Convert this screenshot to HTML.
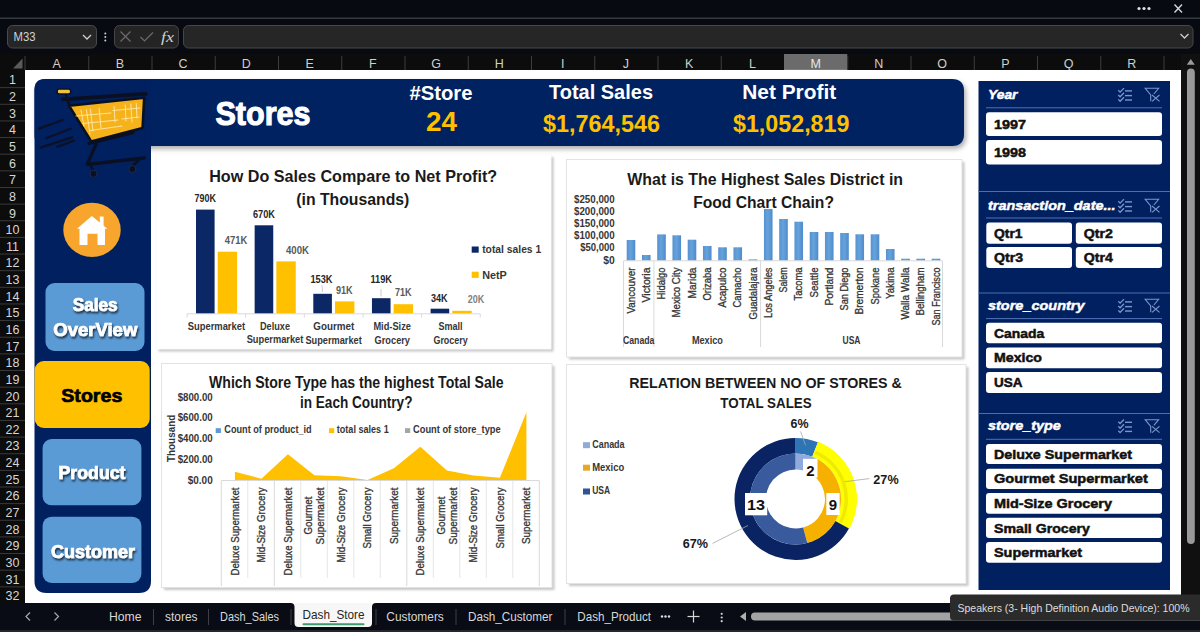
<!DOCTYPE html>
<html><head><meta charset="utf-8"><title>Dash_Store</title>
<style>
*{margin:0;padding:0;box-sizing:border-box}
html,body{width:1200px;height:632px;overflow:hidden;background:#0b0d15}
svg{display:block;font-family:"Liberation Sans",sans-serif}
</style></head><body>
<svg width="1200" height="632" viewBox="0 0 1200 632">
<rect x="0" y="0" width="1200" height="632" fill="#080a11"/>
<line x1="0" y1="18.3" x2="1200" y2="18.3" stroke="#363940" stroke-width="1.6" />
<circle cx="1139" cy="8.5" r="1.6" fill="#e0e0e0"/>
<circle cx="1144" cy="8.5" r="1.6" fill="#e0e0e0"/>
<circle cx="1149" cy="8.5" r="1.6" fill="#e0e0e0"/>
<line x1="1174.5" y1="4.5" x2="1182" y2="12.5" stroke="#d8d8d8" stroke-width="1.3" />
<line x1="1182" y1="4.5" x2="1174.5" y2="12.5" stroke="#d8d8d8" stroke-width="1.3" />
<rect x="7.5" y="25.5" width="89" height="22.5" fill="#262626" rx="5" stroke="#4a4a4a" stroke-width="1"/>
<text x="13.5" y="41.3" font-size="12" fill="#d2d2d2" textLength="22" lengthAdjust="spacingAndGlyphs">M33</text>
<path d="M83 35 L87 39 L91 35" fill="none" stroke="#cfcfcf" stroke-width="1.3"/>
<circle cx="105.3" cy="33.5" r="1" fill="#d0d0d0"/>
<circle cx="105.3" cy="37" r="1" fill="#d0d0d0"/>
<circle cx="105.3" cy="40.5" r="1" fill="#d0d0d0"/>
<rect x="114.5" y="25.5" width="64" height="22.5" fill="#242424" rx="5" stroke="#454545" stroke-width="1"/>
<line x1="120.5" y1="31.5" x2="130.5" y2="41.5" stroke="#6a6a6a" stroke-width="1.2" />
<line x1="130.5" y1="31.5" x2="120.5" y2="41.5" stroke="#6a6a6a" stroke-width="1.2" />
<path d="M140.5 37 L144.5 41 L153 32.5" fill="none" stroke="#6a6a6a" stroke-width="1.2"/>
<text x="161" y="42" font-size="14" fill="#d0d0d0" font-style="italic" textLength="13" lengthAdjust="spacingAndGlyphs" font-family="Liberation Serif">fx</text>
<rect x="183.5" y="25.5" width="1009.5" height="22.5" fill="#262626" rx="5" stroke="#474747" stroke-width="1"/>
<path d="M1180.5 34 L1184.5 38 L1188.5 34" fill="none" stroke="#cfcfcf" stroke-width="1.3"/>
<rect x="0" y="54" width="1181" height="16" fill="#0c0c0c"/>
<path d="M13 68.5 L22.5 68.5 L22.5 58.5 Z" fill="#5a5a5a"/>
<text x="56.625" y="67.5" font-size="12.5" fill="#cfcfcf" text-anchor="middle">A</text>
<line x1="88.75" y1="56" x2="88.75" y2="70" stroke="#3c3c3c" stroke-width="1" />
<text x="119.875" y="67.5" font-size="12.5" fill="#cfcfcf" text-anchor="middle">B</text>
<line x1="152.0" y1="56" x2="152.0" y2="70" stroke="#3c3c3c" stroke-width="1" />
<text x="183.125" y="67.5" font-size="12.5" fill="#cfcfcf" text-anchor="middle">C</text>
<line x1="215.25" y1="56" x2="215.25" y2="70" stroke="#3c3c3c" stroke-width="1" />
<text x="246.375" y="67.5" font-size="12.5" fill="#cfcfcf" text-anchor="middle">D</text>
<line x1="278.5" y1="56" x2="278.5" y2="70" stroke="#3c3c3c" stroke-width="1" />
<text x="309.625" y="67.5" font-size="12.5" fill="#cfcfcf" text-anchor="middle">E</text>
<line x1="341.75" y1="56" x2="341.75" y2="70" stroke="#3c3c3c" stroke-width="1" />
<text x="372.875" y="67.5" font-size="12.5" fill="#cfcfcf" text-anchor="middle">F</text>
<line x1="405.0" y1="56" x2="405.0" y2="70" stroke="#3c3c3c" stroke-width="1" />
<text x="436.125" y="67.5" font-size="12.5" fill="#cfcfcf" text-anchor="middle">G</text>
<line x1="468.25" y1="56" x2="468.25" y2="70" stroke="#3c3c3c" stroke-width="1" />
<text x="499.375" y="67.5" font-size="12.5" fill="#cfcfcf" text-anchor="middle">H</text>
<line x1="531.5" y1="56" x2="531.5" y2="70" stroke="#3c3c3c" stroke-width="1" />
<text x="562.625" y="67.5" font-size="12.5" fill="#cfcfcf" text-anchor="middle">I</text>
<line x1="594.75" y1="56" x2="594.75" y2="70" stroke="#3c3c3c" stroke-width="1" />
<text x="625.875" y="67.5" font-size="12.5" fill="#cfcfcf" text-anchor="middle">J</text>
<line x1="658.0" y1="56" x2="658.0" y2="70" stroke="#3c3c3c" stroke-width="1" />
<text x="689.125" y="67.5" font-size="12.5" fill="#cfcfcf" text-anchor="middle">K</text>
<line x1="721.25" y1="56" x2="721.25" y2="70" stroke="#3c3c3c" stroke-width="1" />
<text x="752.375" y="67.5" font-size="12.5" fill="#cfcfcf" text-anchor="middle">L</text>
<line x1="784.5" y1="56" x2="784.5" y2="70" stroke="#3c3c3c" stroke-width="1" />
<rect x="784.0" y="54" width="63.25" height="16" fill="#6b6b6b"/>
<line x1="784.0" y1="69.5" x2="847.25" y2="69.5" stroke="#3f9f6f" stroke-width="1" />
<text x="815.625" y="67.5" font-size="12.5" fill="#e8e8e8" text-anchor="middle">M</text>
<line x1="847.75" y1="56" x2="847.75" y2="70" stroke="#3c3c3c" stroke-width="1" />
<text x="878.875" y="67.5" font-size="12.5" fill="#cfcfcf" text-anchor="middle">N</text>
<line x1="911.0" y1="56" x2="911.0" y2="70" stroke="#3c3c3c" stroke-width="1" />
<text x="942.125" y="67.5" font-size="12.5" fill="#cfcfcf" text-anchor="middle">O</text>
<line x1="974.25" y1="56" x2="974.25" y2="70" stroke="#3c3c3c" stroke-width="1" />
<text x="1005.375" y="67.5" font-size="12.5" fill="#cfcfcf" text-anchor="middle">P</text>
<line x1="1037.5" y1="56" x2="1037.5" y2="70" stroke="#3c3c3c" stroke-width="1" />
<text x="1068.625" y="67.5" font-size="12.5" fill="#cfcfcf" text-anchor="middle">Q</text>
<line x1="1100.75" y1="56" x2="1100.75" y2="70" stroke="#3c3c3c" stroke-width="1" />
<text x="1131.875" y="67.5" font-size="12.5" fill="#cfcfcf" text-anchor="middle">R</text>
<line x1="1164.0" y1="56" x2="1164.0" y2="70" stroke="#3c3c3c" stroke-width="1" />
<line x1="25" y1="56" x2="25" y2="70" stroke="#3c3c3c" stroke-width="1" />
<rect x="0" y="70" width="25" height="533" fill="#0c0c0c"/>
<text x="12.5" y="84.4" font-size="12.5" fill="#d6d6d6" text-anchor="middle">1</text>
<line x1="0" y1="87.64" x2="25" y2="87.64" stroke="#3a3a3a" stroke-width="1" />
<text x="12.5" y="101.04" font-size="12.5" fill="#d6d6d6" text-anchor="middle">2</text>
<line x1="0" y1="104.28" x2="25" y2="104.28" stroke="#3a3a3a" stroke-width="1" />
<text x="12.5" y="117.68" font-size="12.5" fill="#d6d6d6" text-anchor="middle">3</text>
<line x1="0" y1="120.92" x2="25" y2="120.92" stroke="#3a3a3a" stroke-width="1" />
<text x="12.5" y="134.32" font-size="12.5" fill="#d6d6d6" text-anchor="middle">4</text>
<line x1="0" y1="137.56" x2="25" y2="137.56" stroke="#3a3a3a" stroke-width="1" />
<text x="12.5" y="150.96" font-size="12.5" fill="#d6d6d6" text-anchor="middle">5</text>
<line x1="0" y1="154.2" x2="25" y2="154.2" stroke="#3a3a3a" stroke-width="1" />
<text x="12.5" y="167.6" font-size="12.5" fill="#d6d6d6" text-anchor="middle">6</text>
<line x1="0" y1="170.83999999999997" x2="25" y2="170.83999999999997" stroke="#3a3a3a" stroke-width="1" />
<text x="12.5" y="184.24" font-size="12.5" fill="#d6d6d6" text-anchor="middle">7</text>
<line x1="0" y1="187.48000000000002" x2="25" y2="187.48000000000002" stroke="#3a3a3a" stroke-width="1" />
<text x="12.5" y="200.88000000000002" font-size="12.5" fill="#d6d6d6" text-anchor="middle">8</text>
<line x1="0" y1="204.12" x2="25" y2="204.12" stroke="#3a3a3a" stroke-width="1" />
<text x="12.5" y="217.52" font-size="12.5" fill="#d6d6d6" text-anchor="middle">9</text>
<line x1="0" y1="220.76" x2="25" y2="220.76" stroke="#3a3a3a" stroke-width="1" />
<text x="12.5" y="234.16" font-size="12.5" fill="#d6d6d6" text-anchor="middle">10</text>
<line x1="0" y1="237.39999999999998" x2="25" y2="237.39999999999998" stroke="#3a3a3a" stroke-width="1" />
<text x="12.5" y="250.8" font-size="12.5" fill="#d6d6d6" text-anchor="middle">11</text>
<line x1="0" y1="254.04000000000002" x2="25" y2="254.04000000000002" stroke="#3a3a3a" stroke-width="1" />
<text x="12.5" y="267.44" font-size="12.5" fill="#d6d6d6" text-anchor="middle">12</text>
<line x1="0" y1="270.68" x2="25" y2="270.68" stroke="#3a3a3a" stroke-width="1" />
<text x="12.5" y="284.08" font-size="12.5" fill="#d6d6d6" text-anchor="middle">13</text>
<line x1="0" y1="287.32" x2="25" y2="287.32" stroke="#3a3a3a" stroke-width="1" />
<text x="12.5" y="300.71999999999997" font-size="12.5" fill="#d6d6d6" text-anchor="middle">14</text>
<line x1="0" y1="303.96" x2="25" y2="303.96" stroke="#3a3a3a" stroke-width="1" />
<text x="12.5" y="317.36" font-size="12.5" fill="#d6d6d6" text-anchor="middle">15</text>
<line x1="0" y1="320.6" x2="25" y2="320.6" stroke="#3a3a3a" stroke-width="1" />
<text x="12.5" y="334.0" font-size="12.5" fill="#d6d6d6" text-anchor="middle">16</text>
<line x1="0" y1="337.24" x2="25" y2="337.24" stroke="#3a3a3a" stroke-width="1" />
<text x="12.5" y="350.64" font-size="12.5" fill="#d6d6d6" text-anchor="middle">17</text>
<line x1="0" y1="353.88" x2="25" y2="353.88" stroke="#3a3a3a" stroke-width="1" />
<text x="12.5" y="367.28" font-size="12.5" fill="#d6d6d6" text-anchor="middle">18</text>
<line x1="0" y1="370.52" x2="25" y2="370.52" stroke="#3a3a3a" stroke-width="1" />
<text x="12.5" y="383.91999999999996" font-size="12.5" fill="#d6d6d6" text-anchor="middle">19</text>
<line x1="0" y1="387.15999999999997" x2="25" y2="387.15999999999997" stroke="#3a3a3a" stroke-width="1" />
<text x="12.5" y="400.56" font-size="12.5" fill="#d6d6d6" text-anchor="middle">20</text>
<line x1="0" y1="403.8" x2="25" y2="403.8" stroke="#3a3a3a" stroke-width="1" />
<text x="12.5" y="417.2" font-size="12.5" fill="#d6d6d6" text-anchor="middle">21</text>
<line x1="0" y1="420.44" x2="25" y2="420.44" stroke="#3a3a3a" stroke-width="1" />
<text x="12.5" y="433.84" font-size="12.5" fill="#d6d6d6" text-anchor="middle">22</text>
<line x1="0" y1="437.08" x2="25" y2="437.08" stroke="#3a3a3a" stroke-width="1" />
<text x="12.5" y="450.48" font-size="12.5" fill="#d6d6d6" text-anchor="middle">23</text>
<line x1="0" y1="453.72" x2="25" y2="453.72" stroke="#3a3a3a" stroke-width="1" />
<text x="12.5" y="467.12" font-size="12.5" fill="#d6d6d6" text-anchor="middle">24</text>
<line x1="0" y1="470.36" x2="25" y2="470.36" stroke="#3a3a3a" stroke-width="1" />
<text x="12.5" y="483.76" font-size="12.5" fill="#d6d6d6" text-anchor="middle">25</text>
<line x1="0" y1="487.0" x2="25" y2="487.0" stroke="#3a3a3a" stroke-width="1" />
<text x="12.5" y="500.4" font-size="12.5" fill="#d6d6d6" text-anchor="middle">26</text>
<line x1="0" y1="503.64" x2="25" y2="503.64" stroke="#3a3a3a" stroke-width="1" />
<text x="12.5" y="517.04" font-size="12.5" fill="#d6d6d6" text-anchor="middle">27</text>
<line x1="0" y1="520.28" x2="25" y2="520.28" stroke="#3a3a3a" stroke-width="1" />
<text x="12.5" y="533.68" font-size="12.5" fill="#d6d6d6" text-anchor="middle">28</text>
<line x1="0" y1="536.92" x2="25" y2="536.92" stroke="#3a3a3a" stroke-width="1" />
<text x="12.5" y="550.32" font-size="12.5" fill="#d6d6d6" text-anchor="middle">29</text>
<line x1="0" y1="553.5600000000001" x2="25" y2="553.5600000000001" stroke="#3a3a3a" stroke-width="1" />
<text x="12.5" y="566.9599999999999" font-size="12.5" fill="#d6d6d6" text-anchor="middle">30</text>
<line x1="0" y1="570.1999999999999" x2="25" y2="570.1999999999999" stroke="#3a3a3a" stroke-width="1" />
<text x="12.5" y="583.6" font-size="12.5" fill="#d6d6d6" text-anchor="middle">31</text>
<line x1="0" y1="586.84" x2="25" y2="586.84" stroke="#3a3a3a" stroke-width="1" />
<text x="12.5" y="600.24" font-size="12.5" fill="#d6d6d6" text-anchor="middle">32</text>
<line x1="0" y1="603.48" x2="25" y2="603.48" stroke="#3a3a3a" stroke-width="1" />
<rect x="25" y="70" width="1156" height="533" fill="#ffffff"/>
<rect x="1181" y="54" width="19" height="549" fill="#101010"/>
<path d="M1186.8 64.7 L1190.8 59 L1194.8 64.7 Z" fill="#9a9a9a"/>
<rect x="1187" y="68.5" width="7.8" height="475.5" fill="#9a9a9a" rx="3.9"/>
<rect x="0" y="603" width="1200" height="29" fill="#0a0c15"/>
<rect x="0" y="630" width="1200" height="2" fill="#23262d"/>
<path d="M30 612.5 L26 616.5 L30 620.5" fill="none" stroke="#a8a8a8" stroke-width="1.2"/>
<path d="M54.5 612.5 L58.5 616.5 L54.5 620.5" fill="none" stroke="#a8a8a8" stroke-width="1.2"/>
<text x="109" y="621" font-size="12.2" fill="#d8d8d8" textLength="32.5" lengthAdjust="spacingAndGlyphs">Home</text>
<line x1="153.5" y1="609" x2="153.5" y2="625" stroke="#3d3f46" stroke-width="1" />
<text x="165" y="621" font-size="12.2" fill="#d8d8d8" textLength="32.5" lengthAdjust="spacingAndGlyphs">stores</text>
<line x1="208.5" y1="609" x2="208.5" y2="625" stroke="#3d3f46" stroke-width="1" />
<text x="220" y="621" font-size="12.2" fill="#d8d8d8" textLength="59" lengthAdjust="spacingAndGlyphs">Dash_Sales</text>
<line x1="291" y1="609" x2="291" y2="625" stroke="#3d3f46" stroke-width="1" />
<path d="M290.5 603 Q294.5 603 294.5 607 L294.5 623 Q294.5 627 298.5 627 L368 627 Q372 627 372 623 L372 607 Q372 603 376 603 Z" fill="#f7f7f7"/>
<text x="302.5" y="619.3" font-size="12.2" fill="#262626" textLength="62" lengthAdjust="spacingAndGlyphs">Dash_Store</text>
<rect x="302.5" y="623.2" width="62" height="2" fill="#3d9c6e" rx="1"/>
<line x1="376" y1="609" x2="376" y2="625" stroke="#3d3f46" stroke-width="1" />
<text x="386.3" y="621" font-size="12.2" fill="#d8d8d8" textLength="57.5" lengthAdjust="spacingAndGlyphs">Customers</text>
<line x1="456" y1="609" x2="456" y2="625" stroke="#3d3f46" stroke-width="1" />
<text x="468" y="621" font-size="12.2" fill="#d8d8d8" textLength="84.5" lengthAdjust="spacingAndGlyphs">Dash_Customer</text>
<line x1="565" y1="609" x2="565" y2="625" stroke="#3d3f46" stroke-width="1" />
<text x="577.3" y="621" font-size="12.2" fill="#d8d8d8" textLength="73.7" lengthAdjust="spacingAndGlyphs">Dash_Product</text>
<circle cx="662" cy="616.5" r="1.2" fill="#dcdcdc"/>
<circle cx="665.5" cy="616.5" r="1.2" fill="#dcdcdc"/>
<circle cx="669" cy="616.5" r="1.2" fill="#dcdcdc"/>
<line x1="687.5" y1="616.5" x2="699.5" y2="616.5" stroke="#d8d8d8" stroke-width="1.2" />
<line x1="693.5" y1="610.5" x2="693.5" y2="622.5" stroke="#d8d8d8" stroke-width="1.2" />
<circle cx="721.7" cy="613.8" r="1.1" fill="#d0d0d0"/>
<circle cx="721.7" cy="617.5" r="1.1" fill="#d0d0d0"/>
<circle cx="721.7" cy="621.2" r="1.1" fill="#d0d0d0"/>
<path d="M740 616.5 L746 612 L746 621 Z" fill="#b0b0b0"/>
<rect x="751" y="612.5" width="460" height="8" fill="#a3a3a3" rx="4"/>
<rect x="950" y="594.5" width="260" height="26" fill="#2b2b2b" rx="4"/>
<text x="957.5" y="611.5" font-size="10.6" fill="#dedede" textLength="232" lengthAdjust="spacingAndGlyphs">Speakers (3- High Definition Audio Device): 100%</text>
<defs><filter id="sh" x="-10%" y="-10%" width="120%" height="130%"><feGaussianBlur in="SourceAlpha" stdDeviation="2.4"/><feOffset dx="1.5" dy="3"/><feComponentTransfer><feFuncA type="linear" slope="0.32"/></feComponentTransfer><feMerge><feMergeNode/><feMergeNode in="SourceGraphic"/></feMerge></filter><filter id="tsh" x="-20%" y="-20%" width="140%" height="160%"><feGaussianBlur in="SourceAlpha" stdDeviation="0.9"/><feOffset dx="1.2" dy="1.8"/><feComponentTransfer><feFuncA type="linear" slope="0.75"/></feComponentTransfer><feMerge><feMergeNode/><feMergeNode in="SourceGraphic"/></feMerge></filter><linearGradient id="bar" x1="0" x2="1" y1="0" y2="0"><stop offset="0" stop-color="#5592d0"/><stop offset="0.45" stop-color="#66a3dc"/><stop offset="1" stop-color="#4f8bca"/></linearGradient></defs>
<path filter="url(#sh)" d="M45.5 79 L952 79 Q964 79 964 91 L964 134 Q964 146 952 146 L45.5 146 Q34.5 146 34.5 135 L34.5 90 Q34.5 79 45.5 79 Z" fill="#002060"/>
<path d="M45.5 79 L151 79 L151 581 Q151 593 139 593 L46.5 593 Q34.5 593 34.5 581 L34.5 90 Q34.5 79 45.5 79 Z" fill="#002060"/>
<g stroke-linecap="round" stroke-linejoin="round">
<line x1="39" y1="128.7" x2="62.7" y2="120" stroke="#0a1128" stroke-width="2.3" />
<line x1="46" y1="138.2" x2="70.6" y2="128.7" stroke="#0a1128" stroke-width="2.3" />
<line x1="40.5" y1="147.7" x2="72.2" y2="137.4" stroke="#0a1128" stroke-width="2.3" />
<line x1="57.2" y1="146.9" x2="73.8" y2="140.6" stroke="#0a1128" stroke-width="2.3" />
<path d="M96 144.5 L87.2 164.3 L144.2 158" fill="none" stroke="#0a0f22" stroke-width="3.3"/>
<path d="M90 165 L93.6 171 M140 159 L132.4 166" stroke="#0a0f22" stroke-width="2.4"/>
<circle cx="93.6" cy="173.8" r="3.6" fill="#0a0f22" stroke="#1e2a4a" stroke-width="1"/>
<circle cx="132.4" cy="169" r="3.6" fill="#0a0f22" stroke="#1e2a4a" stroke-width="1"/>
<path d="M88.8 143.5 L133.1 132.7" stroke="#0a0f22" stroke-width="3"/>
<path d="M69 105.7 L144.2 97.8 L142.6 127.9 L91.2 141.4 Z" fill="#F5B21B" stroke="#0a0f22" stroke-width="2.6"/>
<path d="M62.7 99.4 L145.8 93.9" stroke="#0a0f22" stroke-width="3.8"/>
<path d="M65.9 94.7 L69 104.2" stroke="#0a0f22" stroke-width="2.6"/>
<path d="M80.9 110 L84 126 M86.4 109.5 L90 134 M90.4 109 L93 131 M99.1 108 L101 128 M114.1 106.5 L115 122 M125.2 105 L126 121 M130.8 104 L132 122 M136.3 103.5 L137 118 M76 116 L111 113 M113 110.5 L140 108 M83 123.5 L118 120 M122 119 L139 117 M90 130.5 L122 126" stroke="#ffe9a8" stroke-width="0.9" fill="none"/>
<rect x="57.2" y="89.1" width="13.4" height="4.8" fill="#F0C040" rx="2" stroke="#0a0f22" stroke-width="1.4"/>
</g>
<ellipse cx="92" cy="229.9" rx="28.7" ry="27.1" fill="#F7A52C"/>
<path d="M77 228.8 L91.8 216 L99.8 222.6 L99.8 216.5 L103.6 216.5 L103.6 225.8 L107.4 228.8 L105 228.8 L105 245 L97.5 245 L97.5 233.7 L87.5 233.7 L87.5 245 L79.5 245 L79.5 228.8 Z" fill="#ffffff"/>
<rect x="45.5" y="283" width="99.0" height="68" fill="#5B9BD5" rx="9"/>
<rect x="34.7" y="361" width="114.99999999999999" height="67" fill="#FFC000" rx="9"/>
<rect x="42.6" y="439" width="98.80000000000001" height="66.30000000000001" fill="#5B9BD5" rx="9"/>
<rect x="42.6" y="516.7" width="98.80000000000001" height="66.29999999999995" fill="#5B9BD5" rx="9"/>
<g filter="url(#tsh)">
<text x="95.2" y="311.3" font-size="17.5" fill="#fff" text-anchor="middle" font-weight="bold" textLength="45" lengthAdjust="spacingAndGlyphs" stroke="#fff" stroke-width="0.7">Sales</text>
<text x="95.3" y="336" font-size="17.5" fill="#fff" text-anchor="middle" font-weight="bold" textLength="84" lengthAdjust="spacingAndGlyphs" stroke="#fff" stroke-width="0.7">OverView</text>
<text x="92" y="479.2" font-size="18" fill="#fff" text-anchor="middle" font-weight="bold" textLength="67" lengthAdjust="spacingAndGlyphs" stroke="#fff" stroke-width="0.7">Product</text>
<text x="93" y="557.6" font-size="18" fill="#fff" text-anchor="middle" font-weight="bold" textLength="84" lengthAdjust="spacingAndGlyphs" stroke="#fff" stroke-width="0.7">Customer</text>
</g>
<text x="91.8" y="402" font-size="19" fill="#000" text-anchor="middle" font-weight="bold" textLength="61" lengthAdjust="spacingAndGlyphs" stroke="#000" stroke-width="0.7">Stores</text>
<text x="263" y="124.5" font-size="32.5" fill="#fff" text-anchor="middle" font-weight="bold" textLength="95" lengthAdjust="spacingAndGlyphs" stroke="#fff" stroke-width="1.1">Stores</text>
<text x="441" y="100" font-size="19.5" fill="#fff" text-anchor="middle" font-weight="bold" textLength="63" lengthAdjust="spacingAndGlyphs">#Store</text>
<text x="441.5" y="131" font-size="27" fill="#FFC000" text-anchor="middle" font-weight="bold" textLength="31" lengthAdjust="spacingAndGlyphs">24</text>
<text x="601" y="99" font-size="20.5" fill="#fff" text-anchor="middle" font-weight="bold" textLength="104" lengthAdjust="spacingAndGlyphs">Total Sales</text>
<text x="601.6" y="132" font-size="24.5" fill="#FFC000" text-anchor="middle" font-weight="bold" textLength="117" lengthAdjust="spacingAndGlyphs">$1,764,546</text>
<text x="789.2" y="99" font-size="20.5" fill="#fff" text-anchor="middle" font-weight="bold" textLength="94" lengthAdjust="spacingAndGlyphs">Net Profit</text>
<text x="791.2" y="132" font-size="24.5" fill="#FFC000" text-anchor="middle" font-weight="bold" textLength="116.5" lengthAdjust="spacingAndGlyphs">$1,052,819</text>
<defs><filter id="blur2" x="-5%" y="-5%" width="110%" height="110%"><feGaussianBlur stdDeviation="1.3"/></filter></defs>
<rect x="158.5" y="157.0" width="395" height="194.5" fill="rgba(0,0,0,0.22)" filter="url(#blur2)"/>
<rect x="156" y="154.5" width="395" height="194.5" fill="#fff" stroke="#fafafa" stroke-width="1"/>
<rect x="569.0" y="162.0" width="395.5" height="197.5" fill="rgba(0,0,0,0.22)" filter="url(#blur2)"/>
<rect x="566.5" y="159.5" width="395.5" height="197.5" fill="#fff" stroke="#e3e3e3" stroke-width="1"/>
<rect x="164.0" y="366.0" width="390.5" height="224.0" fill="rgba(0,0,0,0.22)" filter="url(#blur2)"/>
<rect x="161.5" y="363.5" width="390.5" height="224.0" fill="#fff" stroke="#e3e3e3" stroke-width="1"/>
<rect x="569.0" y="367.0" width="399.5" height="219.0" fill="rgba(0,0,0,0.22)" filter="url(#blur2)"/>
<rect x="566.5" y="364.5" width="399.5" height="219.0" fill="#fff" stroke="#e3e3e3" stroke-width="1"/>
<defs><linearGradient id="bsh" x1="0" x2="0" y1="0" y2="1"><stop offset="0" stop-color="#000" stop-opacity="0.28"/><stop offset="1" stop-color="#000" stop-opacity="0"/></linearGradient></defs>
<text x="353.2" y="181.8" font-size="16.5" fill="#1a1a1a" text-anchor="middle" font-weight="bold" textLength="288" lengthAdjust="spacingAndGlyphs">How Do Sales Compare to Net Profit?</text>
<text x="352.8" y="204.5" font-size="16.5" fill="#1a1a1a" text-anchor="middle" font-weight="bold" textLength="113" lengthAdjust="spacingAndGlyphs">(in Thousands)</text>
<line x1="187" y1="313.8" x2="480" y2="313.8" stroke="#d9d9d9" stroke-width="1" />
<line x1="187.0" y1="313.8" x2="187.0" y2="317.5" stroke="#d9d9d9" stroke-width="1" />
<line x1="245.65" y1="313.8" x2="245.65" y2="317.5" stroke="#d9d9d9" stroke-width="1" />
<line x1="304.3" y1="313.8" x2="304.3" y2="317.5" stroke="#d9d9d9" stroke-width="1" />
<line x1="362.95" y1="313.8" x2="362.95" y2="317.5" stroke="#d9d9d9" stroke-width="1" />
<line x1="421.6" y1="313.8" x2="421.6" y2="317.5" stroke="#d9d9d9" stroke-width="1" />
<line x1="480.25" y1="313.8" x2="480.25" y2="317.5" stroke="#d9d9d9" stroke-width="1" />
<rect x="196.0" y="209.6" width="18.6" height="103.7" fill="#0C2766"/>
<rect x="217.7" y="251.7" width="19.4" height="61.6" fill="#FFC000"/>
<rect x="254.65" y="225.3" width="18.6" height="88.0" fill="#0C2766"/>
<rect x="276.35" y="261.4" width="19.4" height="51.9" fill="#FFC000"/>
<rect x="313.3" y="293.8" width="18.6" height="19.5" fill="#0C2766"/>
<rect x="335.0" y="301.4" width="19.4" height="11.9" fill="#FFC000"/>
<rect x="371.95" y="298.2" width="18.6" height="15.1" fill="#0C2766"/>
<rect x="393.65" y="304.2" width="19.4" height="9.1" fill="#FFC000"/>
<rect x="430.6" y="308.7" width="18.6" height="4.6" fill="#0C2766"/>
<rect x="452.3" y="310.8" width="19.4" height="2.5" fill="#FFC000"/>
<text x="205.3" y="201.6" font-size="10.2" fill="#262626" text-anchor="middle" font-weight="bold" textLength="21.4" lengthAdjust="spacingAndGlyphs">790K</text>
<text x="235.95" y="244" font-size="10.2" fill="#595959" text-anchor="middle" font-weight="bold" textLength="22.5" lengthAdjust="spacingAndGlyphs">471K</text>
<text x="264.0" y="217.5" font-size="10.2" fill="#262626" text-anchor="middle" font-weight="bold" textLength="22" lengthAdjust="spacingAndGlyphs">670K</text>
<text x="297.5" y="253.6" font-size="10.2" fill="#595959" text-anchor="middle" font-weight="bold" textLength="23" lengthAdjust="spacingAndGlyphs">400K</text>
<text x="321.45" y="283" font-size="10.2" fill="#262626" text-anchor="middle" font-weight="bold" textLength="22.1" lengthAdjust="spacingAndGlyphs">153K</text>
<text x="344.35" y="294" font-size="10.2" fill="#595959" text-anchor="middle" font-weight="bold" textLength="16.7" lengthAdjust="spacingAndGlyphs">91K</text>
<text x="381.2" y="282.6" font-size="10.2" fill="#262626" text-anchor="middle" font-weight="bold" textLength="21.6" lengthAdjust="spacingAndGlyphs">119K</text>
<text x="403.3" y="295.6" font-size="10.2" fill="#595959" text-anchor="middle" font-weight="bold" textLength="16.6" lengthAdjust="spacingAndGlyphs">71K</text>
<text x="439.3" y="301.6" font-size="10.2" fill="#262626" text-anchor="middle" font-weight="bold" textLength="16.6" lengthAdjust="spacingAndGlyphs">34K</text>
<text x="476.05" y="303" font-size="10.2" fill="#7f7f7f" text-anchor="middle" font-weight="bold" textLength="16.5" lengthAdjust="spacingAndGlyphs">20K</text>
<line x1="322" y1="285" x2="322.5" y2="292" stroke="#bfbfbf" stroke-width="0.8" />
<line x1="381" y1="289" x2="381" y2="296.5" stroke="#bfbfbf" stroke-width="0.8" />
<text x="216.4" y="330" font-size="10" fill="#363636" text-anchor="middle" font-weight="bold" textLength="57.3" lengthAdjust="spacingAndGlyphs">Supermarket</text>
<text x="275" y="329.8" font-size="10" fill="#363636" text-anchor="middle" font-weight="bold" textLength="30" lengthAdjust="spacingAndGlyphs">Deluxe</text>
<text x="275" y="342.8" font-size="10" fill="#363636" text-anchor="middle" font-weight="bold" textLength="56.7" lengthAdjust="spacingAndGlyphs">Supermarket</text>
<text x="333.8" y="330" font-size="10" fill="#363636" text-anchor="middle" font-weight="bold" textLength="41" lengthAdjust="spacingAndGlyphs">Gourmet</text>
<text x="333.6" y="343.5" font-size="10" fill="#363636" text-anchor="middle" font-weight="bold" textLength="56.3" lengthAdjust="spacingAndGlyphs">Supermarket</text>
<text x="392.2" y="330" font-size="10" fill="#363636" text-anchor="middle" font-weight="bold" textLength="37.6" lengthAdjust="spacingAndGlyphs">Mid-Size</text>
<text x="392.3" y="343.5" font-size="10" fill="#363636" text-anchor="middle" font-weight="bold" textLength="35.4" lengthAdjust="spacingAndGlyphs">Grocery</text>
<text x="450.6" y="330" font-size="10" fill="#363636" text-anchor="middle" font-weight="bold" textLength="24" lengthAdjust="spacingAndGlyphs">Small</text>
<text x="450.6" y="343.5" font-size="10" fill="#363636" text-anchor="middle" font-weight="bold" textLength="34.3" lengthAdjust="spacingAndGlyphs">Grocery</text>
<rect x="471.7" y="246.5" width="7" height="6.2" fill="#0C2766"/>
<text x="482.2" y="252.5" font-size="11" fill="#363636" font-weight="bold" textLength="59" lengthAdjust="spacingAndGlyphs">total sales 1</text>
<rect x="471.7" y="271.7" width="7" height="6.2" fill="#FFC000"/>
<text x="482.2" y="278.7" font-size="11" fill="#363636" font-weight="bold" textLength="24.6" lengthAdjust="spacingAndGlyphs">NetP</text>
<text x="765.2" y="185.3" font-size="16" fill="#1a1a1a" text-anchor="middle" font-weight="bold" textLength="275.7" lengthAdjust="spacingAndGlyphs">What is The Highest Sales District in</text>
<text x="763.6" y="208" font-size="16" fill="#1a1a1a" text-anchor="middle" font-weight="bold" textLength="140.8" lengthAdjust="spacingAndGlyphs">Food Chart Chain?</text>
<text x="614.7" y="202.9" font-size="10" fill="#363636" text-anchor="end" font-weight="bold" textLength="40.7" lengthAdjust="spacingAndGlyphs">$250,000</text>
<text x="614.7" y="215.04000000000002" font-size="10" fill="#363636" text-anchor="end" font-weight="bold" textLength="40.7" lengthAdjust="spacingAndGlyphs">$200,000</text>
<text x="614.7" y="227.18" font-size="10" fill="#363636" text-anchor="end" font-weight="bold" textLength="40.7" lengthAdjust="spacingAndGlyphs">$150,000</text>
<text x="614.7" y="239.32" font-size="10" fill="#363636" text-anchor="end" font-weight="bold" textLength="40.7" lengthAdjust="spacingAndGlyphs">$100,000</text>
<text x="614.7" y="251.46" font-size="10" fill="#363636" text-anchor="end" font-weight="bold" textLength="34.5" lengthAdjust="spacingAndGlyphs">$50,000</text>
<text x="614.7" y="263.6" font-size="10" fill="#363636" text-anchor="end" font-weight="bold" textLength="11.5" lengthAdjust="spacingAndGlyphs">$0</text>
<rect x="626.7" y="240" width="8.6" height="20.6" fill="url(#bar)"/>
<rect x="641.95" y="255" width="8.6" height="5.6" fill="url(#bar)"/>
<rect x="657.2" y="234.4" width="8.6" height="26.2" fill="url(#bar)"/>
<rect x="672.45" y="235.3" width="8.6" height="25.3" fill="url(#bar)"/>
<rect x="687.7" y="239.7" width="8.6" height="20.9" fill="url(#bar)"/>
<rect x="702.95" y="246" width="8.6" height="14.6" fill="url(#bar)"/>
<rect x="718.2" y="247.3" width="8.6" height="13.3" fill="url(#bar)"/>
<rect x="733.45" y="247.3" width="8.6" height="13.3" fill="url(#bar)"/>
<rect x="748.7" y="259.4" width="8.6" height="1.2" fill="url(#bar)"/>
<rect x="763.95" y="209" width="8.6" height="51.6" fill="url(#bar)"/>
<rect x="779.2" y="219" width="8.6" height="41.6" fill="url(#bar)"/>
<rect x="794.45" y="221.7" width="8.6" height="38.9" fill="url(#bar)"/>
<rect x="809.7" y="232" width="8.6" height="28.6" fill="url(#bar)"/>
<rect x="824.95" y="232" width="8.6" height="28.6" fill="url(#bar)"/>
<rect x="840.2" y="233" width="8.6" height="27.6" fill="url(#bar)"/>
<rect x="855.45" y="234.3" width="8.6" height="26.3" fill="url(#bar)"/>
<rect x="870.7" y="234.3" width="8.6" height="26.3" fill="url(#bar)"/>
<rect x="885.95" y="249" width="8.6" height="11.6" fill="url(#bar)"/>
<rect x="901.2" y="258.7" width="8.6" height="1.9" fill="url(#bar)"/>
<rect x="916.45" y="258.7" width="8.6" height="1.9" fill="url(#bar)"/>
<rect x="931.7" y="258.7" width="8.6" height="1.9" fill="url(#bar)"/>
<line x1="623.5" y1="260.8" x2="942.5" y2="260.8" stroke="#d9d9d9" stroke-width="1" />
<line x1="623.5" y1="261" x2="623.5" y2="347" stroke="#d9d9d9" stroke-width="1" />
<line x1="653.9" y1="261" x2="653.9" y2="347" stroke="#d9d9d9" stroke-width="1" />
<line x1="760.6" y1="261" x2="760.6" y2="347" stroke="#d9d9d9" stroke-width="1" />
<line x1="942.5" y1="261" x2="942.5" y2="347" stroke="#d9d9d9" stroke-width="1" />
<text x="0" y="0" font-size="10.5" fill="#333" text-anchor="end" textLength="46" lengthAdjust="spacingAndGlyphs" transform="translate(634.6,267.5) rotate(-90)" stroke="#333" stroke-width="0.3">Vancouver</text>
<text x="0" y="0" font-size="10.5" fill="#333" text-anchor="end" textLength="35" lengthAdjust="spacingAndGlyphs" transform="translate(649.85,267.5) rotate(-90)" stroke="#333" stroke-width="0.3">Victoria</text>
<text x="0" y="0" font-size="10.5" fill="#333" text-anchor="end" textLength="32" lengthAdjust="spacingAndGlyphs" transform="translate(665.1,267.5) rotate(-90)" stroke="#333" stroke-width="0.3">Hidalgo</text>
<text x="0" y="0" font-size="10.5" fill="#333" text-anchor="end" textLength="50" lengthAdjust="spacingAndGlyphs" transform="translate(680.35,267.5) rotate(-90)" stroke="#333" stroke-width="0.3">Mexico City</text>
<text x="0" y="0" font-size="10.5" fill="#333" text-anchor="end" textLength="31" lengthAdjust="spacingAndGlyphs" transform="translate(695.6,267.5) rotate(-90)" stroke="#333" stroke-width="0.3">Marida</text>
<text x="0" y="0" font-size="10.5" fill="#333" text-anchor="end" textLength="33" lengthAdjust="spacingAndGlyphs" transform="translate(710.85,267.5) rotate(-90)" stroke="#333" stroke-width="0.3">Orizaba</text>
<text x="0" y="0" font-size="10.5" fill="#333" text-anchor="end" textLength="40" lengthAdjust="spacingAndGlyphs" transform="translate(726.1,267.5) rotate(-90)" stroke="#333" stroke-width="0.3">Acapulco</text>
<text x="0" y="0" font-size="10.5" fill="#333" text-anchor="end" textLength="40" lengthAdjust="spacingAndGlyphs" transform="translate(741.35,267.5) rotate(-90)" stroke="#333" stroke-width="0.3">Camacho</text>
<text x="0" y="0" font-size="10.5" fill="#333" text-anchor="end" textLength="52" lengthAdjust="spacingAndGlyphs" transform="translate(756.6,267.5) rotate(-90)" stroke="#333" stroke-width="0.3">Guadalajara</text>
<text x="0" y="0" font-size="10.5" fill="#333" text-anchor="end" textLength="50.5" lengthAdjust="spacingAndGlyphs" transform="translate(771.85,267.5) rotate(-90)" stroke="#333" stroke-width="0.3">Los Angeles</text>
<text x="0" y="0" font-size="10.5" fill="#333" text-anchor="end" textLength="25" lengthAdjust="spacingAndGlyphs" transform="translate(787.1,267.5) rotate(-90)" stroke="#333" stroke-width="0.3">Salem</text>
<text x="0" y="0" font-size="10.5" fill="#333" text-anchor="end" textLength="33" lengthAdjust="spacingAndGlyphs" transform="translate(802.35,267.5) rotate(-90)" stroke="#333" stroke-width="0.3">Tacoma</text>
<text x="0" y="0" font-size="10.5" fill="#333" text-anchor="end" textLength="30" lengthAdjust="spacingAndGlyphs" transform="translate(817.6,267.5) rotate(-90)" stroke="#333" stroke-width="0.3">Seattle</text>
<text x="0" y="0" font-size="10.5" fill="#333" text-anchor="end" textLength="38" lengthAdjust="spacingAndGlyphs" transform="translate(832.85,267.5) rotate(-90)" stroke="#333" stroke-width="0.3">Portland</text>
<text x="0" y="0" font-size="10.5" fill="#333" text-anchor="end" textLength="43" lengthAdjust="spacingAndGlyphs" transform="translate(848.1,267.5) rotate(-90)" stroke="#333" stroke-width="0.3">San Diego</text>
<text x="0" y="0" font-size="10.5" fill="#333" text-anchor="end" textLength="47" lengthAdjust="spacingAndGlyphs" transform="translate(863.35,267.5) rotate(-90)" stroke="#333" stroke-width="0.3">Bremerton</text>
<text x="0" y="0" font-size="10.5" fill="#333" text-anchor="end" textLength="37" lengthAdjust="spacingAndGlyphs" transform="translate(878.6,267.5) rotate(-90)" stroke="#333" stroke-width="0.3">Spokane</text>
<text x="0" y="0" font-size="10.5" fill="#333" text-anchor="end" textLength="31.5" lengthAdjust="spacingAndGlyphs" transform="translate(893.85,267.5) rotate(-90)" stroke="#333" stroke-width="0.3">Yakima</text>
<text x="0" y="0" font-size="10.5" fill="#333" text-anchor="end" textLength="52" lengthAdjust="spacingAndGlyphs" transform="translate(909.1,267.5) rotate(-90)" stroke="#333" stroke-width="0.3">Walla Walla</text>
<text x="0" y="0" font-size="10.5" fill="#333" text-anchor="end" textLength="48" lengthAdjust="spacingAndGlyphs" transform="translate(924.35,267.5) rotate(-90)" stroke="#333" stroke-width="0.3">Bellingham</text>
<text x="0" y="0" font-size="10.5" fill="#333" text-anchor="end" textLength="58" lengthAdjust="spacingAndGlyphs" transform="translate(939.6,267.5) rotate(-90)" stroke="#333" stroke-width="0.3">San Francisco</text>
<text x="638.7" y="344.2" font-size="10" fill="#363636" text-anchor="middle" font-weight="bold" textLength="31.5" lengthAdjust="spacingAndGlyphs">Canada</text>
<text x="707.4" y="344.2" font-size="10" fill="#363636" text-anchor="middle" font-weight="bold" textLength="31" lengthAdjust="spacingAndGlyphs">Mexico</text>
<text x="851.5" y="343.8" font-size="10" fill="#363636" text-anchor="middle" font-weight="bold" textLength="18" lengthAdjust="spacingAndGlyphs">USA</text>
<text x="356.3" y="387.5" font-size="16" fill="#1a1a1a" text-anchor="middle" font-weight="bold" textLength="294.6" lengthAdjust="spacingAndGlyphs">Which Store Type has the highest Total Sale</text>
<text x="356.2" y="407.5" font-size="16" fill="#1a1a1a" text-anchor="middle" font-weight="bold" textLength="112.5" lengthAdjust="spacingAndGlyphs">in Each Country?</text>
<text x="212.7" y="400.5" font-size="10" fill="#363636" text-anchor="end" font-weight="bold" textLength="35" lengthAdjust="spacingAndGlyphs">$800.00</text>
<text x="212.7" y="421.25" font-size="10" fill="#363636" text-anchor="end" font-weight="bold" textLength="35" lengthAdjust="spacingAndGlyphs">$600.00</text>
<text x="212.7" y="442.0" font-size="10" fill="#363636" text-anchor="end" font-weight="bold" textLength="35" lengthAdjust="spacingAndGlyphs">$400.00</text>
<text x="212.7" y="462.75" font-size="10" fill="#363636" text-anchor="end" font-weight="bold" textLength="35" lengthAdjust="spacingAndGlyphs">$200.00</text>
<text x="212.7" y="483.5" font-size="10" fill="#363636" text-anchor="end" font-weight="bold" textLength="25" lengthAdjust="spacingAndGlyphs">$0.00</text>
<text x="0" y="0" font-size="10.5" fill="#363636" text-anchor="middle" font-weight="bold" textLength="47.3" lengthAdjust="spacingAndGlyphs" transform="translate(174.8,438.4) rotate(-90)">Thousand</text>
<rect x="215.7" y="428.2" width="5.2" height="4.8" fill="#5B9BD5"/>
<text x="224.3" y="432.9" font-size="10.2" fill="#363636" font-weight="bold" textLength="87.4" lengthAdjust="spacingAndGlyphs">Count of product_id</text>
<rect x="329" y="428.2" width="5.2" height="4.8" fill="#FFC000"/>
<text x="336.8" y="432.9" font-size="10.2" fill="#363636" font-weight="bold" textLength="51.9" lengthAdjust="spacingAndGlyphs">total sales 1</text>
<rect x="405" y="428.2" width="5.2" height="4.8" fill="#A5A5A5"/>
<text x="413" y="432.9" font-size="10.2" fill="#363636" font-weight="bold" textLength="87.7" lengthAdjust="spacingAndGlyphs">Count of store_type</text>
<polygon points="234.9,480 234.9,471.7 261.4,478.8 287.9,454.2 314.4,475.2 340.9,476.2 367.4,480 393.9,468.3 420.4,446.8 446.9,470.5 473.4,475.6 499.9,477.8 526.4,412.3 526.4,480" fill="#FFC000"/>
<line x1="221.3" y1="480.5" x2="539.3" y2="480.5" stroke="#d9d9d9" stroke-width="1" />
<line x1="221.3" y1="481" x2="221.3" y2="586" stroke="#d9d9d9" stroke-width="1" />
<line x1="247.8" y1="481" x2="247.8" y2="578" stroke="#e6e6e6" stroke-width="1" />
<line x1="274.3" y1="481" x2="274.3" y2="586" stroke="#d9d9d9" stroke-width="1" />
<line x1="300.8" y1="481" x2="300.8" y2="578" stroke="#e6e6e6" stroke-width="1" />
<line x1="327.3" y1="481" x2="327.3" y2="578" stroke="#e6e6e6" stroke-width="1" />
<line x1="353.8" y1="481" x2="353.8" y2="578" stroke="#e6e6e6" stroke-width="1" />
<line x1="380.3" y1="481" x2="380.3" y2="578" stroke="#e6e6e6" stroke-width="1" />
<line x1="406.8" y1="481" x2="406.8" y2="586" stroke="#d9d9d9" stroke-width="1" />
<line x1="433.3" y1="481" x2="433.3" y2="578" stroke="#e6e6e6" stroke-width="1" />
<line x1="459.8" y1="481" x2="459.8" y2="578" stroke="#e6e6e6" stroke-width="1" />
<line x1="486.3" y1="481" x2="486.3" y2="578" stroke="#e6e6e6" stroke-width="1" />
<line x1="512.8" y1="481" x2="512.8" y2="578" stroke="#e6e6e6" stroke-width="1" />
<line x1="539.3" y1="481" x2="539.3" y2="586" stroke="#d9d9d9" stroke-width="1" />
<text x="0" y="0" font-size="10.5" fill="#333" text-anchor="end" textLength="88" lengthAdjust="spacingAndGlyphs" transform="translate(238.5,487.5) rotate(-90)" stroke="#333" stroke-width="0.3">Deluxe Supermarket</text>
<text x="0" y="0" font-size="10.5" fill="#333" text-anchor="end" textLength="75" lengthAdjust="spacingAndGlyphs" transform="translate(265.0,487.5) rotate(-90)" stroke="#333" stroke-width="0.3">Mid-Size Grocery</text>
<text x="0" y="0" font-size="10.5" fill="#333" text-anchor="end" textLength="88" lengthAdjust="spacingAndGlyphs" transform="translate(291.5,487.5) rotate(-90)" stroke="#333" stroke-width="0.3">Deluxe Supermarket</text>
<text x="0" y="0" font-size="10.5" fill="#333" text-anchor="middle" textLength="38" lengthAdjust="spacingAndGlyphs" transform="translate(312.2,515.5) rotate(-90)" stroke="#333" stroke-width="0.3">Gourmet</text>
<text x="0" y="0" font-size="10.5" fill="#333" text-anchor="end" textLength="57" lengthAdjust="spacingAndGlyphs" transform="translate(324.2,487.5) rotate(-90)" stroke="#333" stroke-width="0.3">Supermarket</text>
<text x="0" y="0" font-size="10.5" fill="#333" text-anchor="end" textLength="75" lengthAdjust="spacingAndGlyphs" transform="translate(344.5,487.5) rotate(-90)" stroke="#333" stroke-width="0.3">Mid-Size Grocery</text>
<text x="0" y="0" font-size="10.5" fill="#333" text-anchor="end" textLength="61" lengthAdjust="spacingAndGlyphs" transform="translate(371.0,487.5) rotate(-90)" stroke="#333" stroke-width="0.3">Small Grocery</text>
<text x="0" y="0" font-size="10.5" fill="#333" text-anchor="end" textLength="56.5" lengthAdjust="spacingAndGlyphs" transform="translate(397.5,487.5) rotate(-90)" stroke="#333" stroke-width="0.3">Supermarket</text>
<text x="0" y="0" font-size="10.5" fill="#333" text-anchor="end" textLength="88" lengthAdjust="spacingAndGlyphs" transform="translate(424.0,487.5) rotate(-90)" stroke="#333" stroke-width="0.3">Deluxe Supermarket</text>
<text x="0" y="0" font-size="10.5" fill="#333" text-anchor="middle" textLength="38" lengthAdjust="spacingAndGlyphs" transform="translate(444.7,515.5) rotate(-90)" stroke="#333" stroke-width="0.3">Gourmet</text>
<text x="0" y="0" font-size="10.5" fill="#333" text-anchor="end" textLength="57" lengthAdjust="spacingAndGlyphs" transform="translate(456.7,487.5) rotate(-90)" stroke="#333" stroke-width="0.3">Supermarket</text>
<text x="0" y="0" font-size="10.5" fill="#333" text-anchor="end" textLength="75" lengthAdjust="spacingAndGlyphs" transform="translate(477.0,487.5) rotate(-90)" stroke="#333" stroke-width="0.3">Mid-Size Grocery</text>
<text x="0" y="0" font-size="10.5" fill="#333" text-anchor="end" textLength="61" lengthAdjust="spacingAndGlyphs" transform="translate(503.5,487.5) rotate(-90)" stroke="#333" stroke-width="0.3">Small Grocery</text>
<text x="0" y="0" font-size="10.5" fill="#333" text-anchor="end" textLength="56.5" lengthAdjust="spacingAndGlyphs" transform="translate(530.0,487.5) rotate(-90)" stroke="#333" stroke-width="0.3">Supermarket</text>
<text x="765.5" y="388.1" font-size="14.8" fill="#1a1a1a" text-anchor="middle" font-weight="bold" textLength="272.5" lengthAdjust="spacingAndGlyphs">RELATION BETWEEN NO OF STORES &amp;</text>
<text x="766" y="407.6" font-size="14.8" fill="#1a1a1a" text-anchor="middle" font-weight="bold" textLength="91.4" lengthAdjust="spacingAndGlyphs">TOTAL SALES</text>
<rect x="583" y="442.2" width="7" height="6" fill="#8FAADC"/>
<text x="592.2" y="447.7" font-size="10" fill="#363636" font-weight="bold" textLength="32.4" lengthAdjust="spacingAndGlyphs">Canada</text>
<rect x="583" y="464.7" width="7" height="6" fill="#E9A824"/>
<text x="592.2" y="470.9" font-size="10" fill="#363636" font-weight="bold" textLength="32" lengthAdjust="spacingAndGlyphs">Mexico</text>
<rect x="583" y="488.5" width="7" height="6" fill="#2F5597"/>
<text x="592.2" y="494" font-size="10" fill="#363636" font-weight="bold" textLength="18" lengthAdjust="spacingAndGlyphs">USA</text>
<path d="M795.5 438.0 A61 61 0 0 1 817.96 442.28 L812.25 456.7 A45.5 45.5 0 0 0 795.5 453.5 Z" fill="#2E75B6" />
<path d="M818.14 441.82 A61.5 61.5 0 0 1 849.39 528.63 L835.37 520.92 A45.5 45.5 0 0 0 812.25 456.7 Z" fill="#FFFF00" />
<path d="M816.01 450.67 A52.5 52.5 0 0 1 842.07 523.24 L838.96 521.63 A49 49 0 0 0 814.65 453.9 Z" fill="#E2D800" opacity="0.55"/>
<path d="M848.95 528.39 A61 61 0 1 1 795.5 438.0 L795.5 453.5 A45.5 45.5 0 1 0 835.37 520.92 Z" fill="#0A2463" />
<path d="M795.5 453.5 A45.5 45.5 0 0 1 818.25 459.6 L810.25 473.45 A29.5 29.5 0 0 0 795.5 469.5 Z" fill="#8FAADC" />
<path d="M818.25 459.6 A45.5 45.5 0 0 1 807.28 542.95 L803.14 527.49 A29.5 29.5 0 0 0 810.25 473.45 Z" fill="#F5B000" />
<path d="M807.28 542.95 A45.5 45.5 0 1 1 795.5 453.5 L795.5 469.5 A29.5 29.5 0 1 0 803.14 527.49 Z" fill="#3A5A9E" />
<rect x="803" y="458.8" width="14.5" height="18.8" fill="#fff"/>
<text x="810.3" y="475.8" font-size="15" fill="#111" text-anchor="middle" font-weight="bold">2</text>
<rect x="745" y="493" width="22.2" height="22.3" fill="#fff"/>
<text x="756.1" y="509.8" font-size="15" fill="#111" text-anchor="middle" font-weight="bold" textLength="18" lengthAdjust="spacingAndGlyphs">13</text>
<rect x="826.3" y="493" width="13.3" height="22" fill="#fff"/>
<text x="833" y="509.8" font-size="15" fill="#111" text-anchor="middle" font-weight="bold">9</text>
<text x="799.6" y="427.7" font-size="12" fill="#1a1a1a" text-anchor="middle" font-weight="bold" textLength="18" lengthAdjust="spacingAndGlyphs">6%</text>
<text x="886" y="483.8" font-size="12" fill="#1a1a1a" text-anchor="middle" font-weight="bold" textLength="25.3" lengthAdjust="spacingAndGlyphs">27%</text>
<text x="695.3" y="547.7" font-size="12" fill="#1a1a1a" text-anchor="middle" font-weight="bold" textLength="25.3" lengthAdjust="spacingAndGlyphs">67%</text>
<line x1="800.6" y1="431.4" x2="805.5" y2="445.2" stroke="#a6a6a6" stroke-width="0.8" />
<line x1="869.4" y1="478.6" x2="844.7" y2="481.7" stroke="#a6a6a6" stroke-width="0.8" />
<line x1="712.6" y1="543.4" x2="748" y2="525.5" stroke="#a6a6a6" stroke-width="0.8" />
<rect x="978.5" y="81" width="191.5" height="509" fill="#002060"/>
<text x="988" y="99" font-size="13" fill="#fff" font-weight="bold" font-style="italic" textLength="29.5" lengthAdjust="spacingAndGlyphs" stroke="#fff" stroke-width="0.45">Year</text>
<line x1="986" y1="107.8" x2="1162" y2="107.8" stroke="#5272b8" stroke-width="1" />
<path d="M1118.3 90.3 L1120.1 92.1 L1124 88.1" fill="none" stroke="#7d95cc" stroke-width="1.3"/>
<path d="M1125 90.9 H1132" stroke="#7d95cc" stroke-width="1.4"/>
<path d="M1118.3 95.0 L1120.1 96.8 L1124 92.8" fill="none" stroke="#7d95cc" stroke-width="1.3"/>
<path d="M1125 95.6 H1132" stroke="#7d95cc" stroke-width="1.4"/>
<path d="M1118.3 99.4 L1120.1 101.2 L1124 97.2" fill="none" stroke="#7d95cc" stroke-width="1.3"/>
<path d="M1125 100 H1132" stroke="#7d95cc" stroke-width="1.4"/>
<path d="M1153.9 94.0 L1158.6 88.3 L1145.2 88.3 L1150.7 95.0 L1150.7 101.3" fill="none" stroke="#7d95cc" stroke-width="1.1"/>
<path d="M1152 95.0 L1159.5 101.3 M1159.5 95.0 L1152 101.3" stroke="#7d95cc" stroke-width="1.1"/>
<rect x="986" y="112.2" width="176" height="23.700000000000003" fill="#fff" rx="3"/>
<text x="994" y="128.65" font-size="13.2" fill="#111" font-weight="bold" textLength="32" lengthAdjust="spacingAndGlyphs" stroke="#111" stroke-width="0.5">1997</text>
<rect x="986" y="139.9" width="176" height="24.5" fill="#fff" rx="3"/>
<text x="994" y="156.75" font-size="13.2" fill="#111" font-weight="bold" textLength="32" lengthAdjust="spacingAndGlyphs" stroke="#111" stroke-width="0.5">1998</text>
<line x1="978.5" y1="191.5" x2="1170" y2="191.5" stroke="#4b6db3" stroke-width="1" />
<text x="988" y="210" font-size="13" fill="#fff" font-weight="bold" font-style="italic" textLength="127.5" lengthAdjust="spacingAndGlyphs" stroke="#fff" stroke-width="0.45">transaction_date...</text>
<line x1="986" y1="218" x2="1162" y2="218" stroke="#5272b8" stroke-width="1" />
<path d="M1118.3 201.3 L1120.1 203.1 L1124 199.1" fill="none" stroke="#7d95cc" stroke-width="1.3"/>
<path d="M1125 201.9 H1132" stroke="#7d95cc" stroke-width="1.4"/>
<path d="M1118.3 206.0 L1120.1 207.8 L1124 203.8" fill="none" stroke="#7d95cc" stroke-width="1.3"/>
<path d="M1125 206.6 H1132" stroke="#7d95cc" stroke-width="1.4"/>
<path d="M1118.3 210.4 L1120.1 212.2 L1124 208.2" fill="none" stroke="#7d95cc" stroke-width="1.3"/>
<path d="M1125 211 H1132" stroke="#7d95cc" stroke-width="1.4"/>
<path d="M1153.9 205.0 L1158.6 199.3 L1145.2 199.3 L1150.7 206.0 L1150.7 212.3" fill="none" stroke="#7d95cc" stroke-width="1.1"/>
<path d="M1152 206.0 L1159.5 212.3 M1159.5 206.0 L1152 212.3" stroke="#7d95cc" stroke-width="1.1"/>
<rect x="986.3" y="222.5" width="85.70000000000005" height="21.30000000000001" fill="#fff" rx="3"/>
<text x="994" y="237.75" font-size="13.2" fill="#111" font-weight="bold" textLength="28.5" lengthAdjust="spacingAndGlyphs" stroke="#111" stroke-width="0.5">Qtr1</text>
<rect x="1075.8" y="222.5" width="86.20000000000005" height="21.30000000000001" fill="#fff" rx="3"/>
<text x="1083.8" y="237.75" font-size="13.2" fill="#111" font-weight="bold" textLength="29" lengthAdjust="spacingAndGlyphs" stroke="#111" stroke-width="0.5">Qtr2</text>
<rect x="986.3" y="247" width="85.70000000000005" height="21" fill="#fff" rx="3"/>
<text x="994" y="262.1" font-size="13.2" fill="#111" font-weight="bold" textLength="29" lengthAdjust="spacingAndGlyphs" stroke="#111" stroke-width="0.5">Qtr3</text>
<rect x="1075.8" y="247" width="86.20000000000005" height="21" fill="#fff" rx="3"/>
<text x="1083.8" y="262.1" font-size="13.2" fill="#111" font-weight="bold" textLength="29" lengthAdjust="spacingAndGlyphs" stroke="#111" stroke-width="0.5">Qtr4</text>
<line x1="978.5" y1="293" x2="1170" y2="293" stroke="#4b6db3" stroke-width="1" />
<text x="988" y="310" font-size="13" fill="#fff" font-weight="bold" font-style="italic" textLength="96.5" lengthAdjust="spacingAndGlyphs" stroke="#fff" stroke-width="0.45">store_country</text>
<line x1="986" y1="318.6" x2="1162" y2="318.6" stroke="#5272b8" stroke-width="1" />
<path d="M1118.3 301.3 L1120.1 303.1 L1124 299.1" fill="none" stroke="#7d95cc" stroke-width="1.3"/>
<path d="M1125 301.9 H1132" stroke="#7d95cc" stroke-width="1.4"/>
<path d="M1118.3 306.0 L1120.1 307.8 L1124 303.8" fill="none" stroke="#7d95cc" stroke-width="1.3"/>
<path d="M1125 306.6 H1132" stroke="#7d95cc" stroke-width="1.4"/>
<path d="M1118.3 310.4 L1120.1 312.2 L1124 308.2" fill="none" stroke="#7d95cc" stroke-width="1.3"/>
<path d="M1125 311 H1132" stroke="#7d95cc" stroke-width="1.4"/>
<path d="M1153.9 305.0 L1158.6 299.3 L1145.2 299.3 L1150.7 306.0 L1150.7 312.3" fill="none" stroke="#7d95cc" stroke-width="1.1"/>
<path d="M1152 306.0 L1159.5 312.3 M1159.5 306.0 L1152 312.3" stroke="#7d95cc" stroke-width="1.1"/>
<rect x="986" y="322.7" width="176" height="20.5" fill="#fff" rx="3"/>
<text x="994" y="337.55" font-size="13.2" fill="#111" font-weight="bold" textLength="50.3" lengthAdjust="spacingAndGlyphs" stroke="#111" stroke-width="0.5">Canada</text>
<rect x="986" y="347.4" width="176" height="20.900000000000034" fill="#fff" rx="3"/>
<text x="994" y="362.45" font-size="13.2" fill="#111" font-weight="bold" textLength="48" lengthAdjust="spacingAndGlyphs" stroke="#111" stroke-width="0.5">Mexico</text>
<rect x="986" y="372.1" width="176" height="20.899999999999977" fill="#fff" rx="3"/>
<text x="994" y="387.15" font-size="13.2" fill="#111" font-weight="bold" textLength="28.5" lengthAdjust="spacingAndGlyphs" stroke="#111" stroke-width="0.5">USA</text>
<line x1="978.5" y1="413.5" x2="1170" y2="413.5" stroke="#4b6db3" stroke-width="1" />
<text x="988" y="430.4" font-size="13" fill="#fff" font-weight="bold" font-style="italic" textLength="72.8" lengthAdjust="spacingAndGlyphs" stroke="#fff" stroke-width="0.45">store_type</text>
<line x1="986" y1="439.3" x2="1162" y2="439.3" stroke="#5272b8" stroke-width="1" />
<path d="M1118.3 421.7 L1120.1 423.5 L1124 419.5" fill="none" stroke="#7d95cc" stroke-width="1.3"/>
<path d="M1125 422.3 H1132" stroke="#7d95cc" stroke-width="1.4"/>
<path d="M1118.3 426.4 L1120.1 428.2 L1124 424.2" fill="none" stroke="#7d95cc" stroke-width="1.3"/>
<path d="M1125 427.0 H1132" stroke="#7d95cc" stroke-width="1.4"/>
<path d="M1118.3 430.8 L1120.1 432.6 L1124 428.6" fill="none" stroke="#7d95cc" stroke-width="1.3"/>
<path d="M1125 431.4 H1132" stroke="#7d95cc" stroke-width="1.4"/>
<path d="M1153.9 425.4 L1158.6 419.7 L1145.2 419.7 L1150.7 426.4 L1150.7 432.7" fill="none" stroke="#7d95cc" stroke-width="1.1"/>
<path d="M1152 426.4 L1159.5 432.7 M1159.5 426.4 L1152 432.7" stroke="#7d95cc" stroke-width="1.1"/>
<rect x="986" y="444" width="176" height="20" fill="#fff" rx="3"/>
<text x="994" y="458.6" font-size="13.2" fill="#111" font-weight="bold" textLength="138" lengthAdjust="spacingAndGlyphs" stroke="#111" stroke-width="0.5">Deluxe Supermarket</text>
<rect x="986" y="468.7" width="176" height="20.30000000000001" fill="#fff" rx="3"/>
<text x="994" y="483.45" font-size="13.2" fill="#111" font-weight="bold" textLength="153.8" lengthAdjust="spacingAndGlyphs" stroke="#111" stroke-width="0.5">Gourmet Supermarket</text>
<rect x="986" y="493" width="176" height="20.700000000000045" fill="#fff" rx="3"/>
<text x="994" y="507.95" font-size="13.2" fill="#111" font-weight="bold" textLength="118" lengthAdjust="spacingAndGlyphs" stroke="#111" stroke-width="0.5">Mid-Size Grocery</text>
<rect x="986" y="517.8" width="176" height="20.200000000000045" fill="#fff" rx="3"/>
<text x="994" y="532.5" font-size="13.2" fill="#111" font-weight="bold" textLength="96" lengthAdjust="spacingAndGlyphs" stroke="#111" stroke-width="0.5">Small Grocery</text>
<rect x="986" y="542" width="176" height="20.700000000000045" fill="#fff" rx="3"/>
<text x="994" y="556.95" font-size="13.2" fill="#111" font-weight="bold" textLength="88" lengthAdjust="spacingAndGlyphs" stroke="#111" stroke-width="0.5">Supermarket</text>
</svg>
</body></html>
